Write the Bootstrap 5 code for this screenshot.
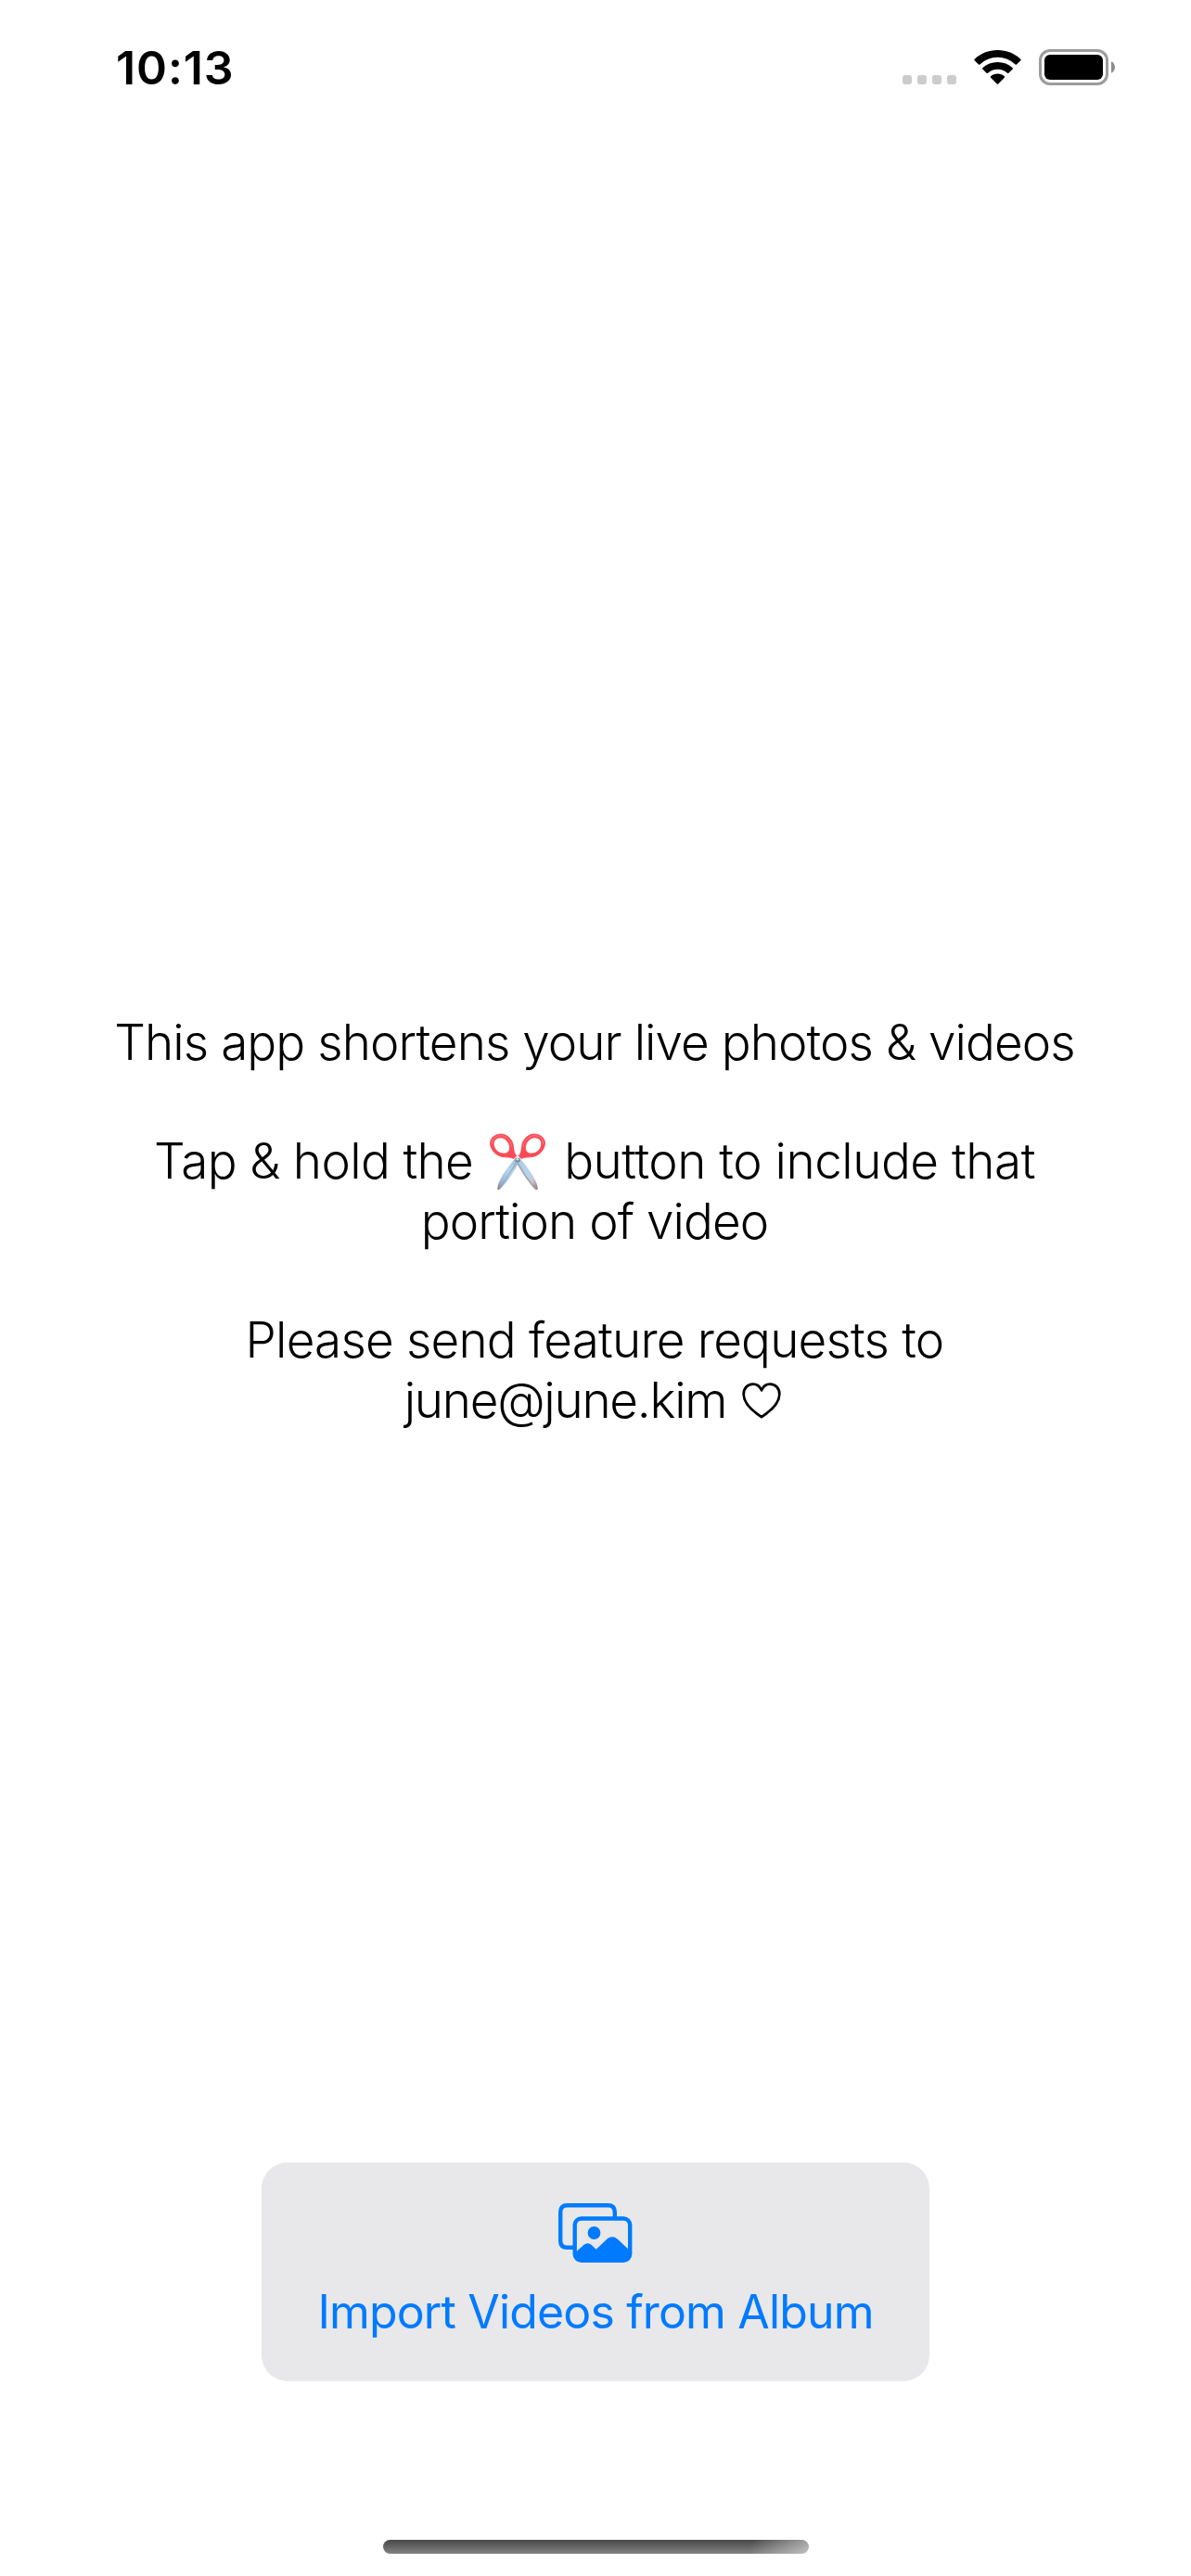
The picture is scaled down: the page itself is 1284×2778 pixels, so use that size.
<!DOCTYPE html>
<html lang="en">
<head>
<meta charset="utf-8">
<meta name="viewport" content="width=device-width, initial-scale=1">
<title>Shorten live photos &amp; videos</title>
<link href="https://cdn.jsdelivr.net/npm/bootstrap@5.3.0/dist/css/bootstrap.min.css" rel="stylesheet">
<script src="https://cdn.jsdelivr.net/npm/bootstrap@5.3.0/dist/js/bootstrap.bundle.min.js"></script>
<style>
  body { font-family: Inter, "Liberation Sans", sans-serif; color: #000; background: #fff; height: 2778px; overflow: hidden; }
  svg { display: block; flex: none; }
  .status-bar { height: 141px; padding: 53px 82px 0 125px; }
  .clock { font-size: 50px; font-weight: 600; line-height: 60px; letter-spacing: .9px; margin-top: -10px; }
  .signal { gap: 6px; margin: 28px 19px 0 0; }
  .signal i { width: 10px; height: 10px; border-radius: 3px; background: #ccc; }
  .wifi { margin: 1px 19px 0 0; }
  .intro { margin-top: 950.5px; padding-right: 2px; font-size: 53px; font-weight: 300; line-height: 64.4px; white-space: nowrap; }
  .intro p { margin-bottom: 64.4px; }
  .intro p:last-child { margin-bottom: 0; }
  .intro p > span { display: flex; justify-content: center; height: 64.4px; }
  .scissors { margin: 2px 20px 0 18px; }
  .heart { margin: 13px 4px 0 17px; }
  .import-btn { --bs-btn-bg: #e8e8ea; --bs-btn-color: #007aff; --bs-btn-hover-bg: #dedee1; --bs-btn-hover-color: #007aff;
    width: 720px; height: 236px; border: 0; border-radius: 28px; padding: 44px 0 0; margin-top: 789.5px;
    font-size: 50px; line-height: 60px; letter-spacing: -.85px; }
  .import-btn span { margin-top: 23px; }
  .home-bar { width: 459px; height: 15px; border-radius: 8px; margin-top: auto; margin-bottom: 24px;
    background: linear-gradient(100deg, rgba(255,255,255,0) 86%, rgba(255,255,255,.5) 100%), linear-gradient(#484848, #828282); }
  .ls-a { letter-spacing: -.93px; } .ls-b { letter-spacing: -.65px; } .ls-c { letter-spacing: -.49px; }
  .ls-d { letter-spacing: -.93px; } .ls-e { letter-spacing: -.8px; } .ls-f { letter-spacing: -1.27px; }
</style>
</head>
<body class="d-flex flex-column align-items-center">
  <header class="status-bar w-100 d-flex justify-content-between align-items-start">
    <div class="clock">10:13</div>
    <div class="d-flex align-items-start">
      <div class="signal d-flex"><i></i><i></i><i></i><i></i></div>
      <svg class="wifi" width="51" height="37" viewBox="0 0 51 37" aria-label="Wi-Fi">
        <path d="M25.500 0C35 0 44 3.600 50.300 9.800Q51 10.500 50.300 11.200L46 15.400Q45.300 16 44.600 15.400A27.500 27.500 0 0 0 6.400 15.400Q5.700 16 5 15.400L.7 11.200Q0 10.500.7 9.800C7 3.600 16 0 25.500 0Z"/>
        <path d="M25.500 13C31.600 13 37.300 15.200 41.700 19.200Q42.400 19.900 41.700 20.600L37.400 24.800Q36.700 25.400 36 24.800A15.600 15.600 0 0 0 15 24.800Q14.300 25.400 13.600 24.800L9.300 20.600Q8.600 19.900 9.300 19.200C13.700 15.200 19.400 13 25.500 13Z"/>
        <path d="M25.500 25.600C28.300 25.600 30.900 26.600 32.900 28.300Q33.600 29 32.900 29.700L26.200 36.400Q25.500 37 24.800 36.400L18.100 29.700Q17.400 29 18.100 28.300C20.100 26.600 22.700 25.600 25.500 25.600Z"/>
      </svg>
      <svg width="82" height="39" viewBox="0 0 82 39" aria-label="Battery">
        <rect x="1.500" y="1.500" width="72" height="36" rx="10.500" fill="none" stroke="#9c9c9c" stroke-width="3"/>
        <rect x="6" y="6" width="63" height="27" rx="6"/>
        <path d="M78 13.300C80.400 14.300 82 16.700 82 19.500S80.400 24.700 78 25.700Z" fill="#8c8c8c"/>
      </svg>
    </div>
  </header>

  <main class="intro w-100">
    <p><span class="ls-a">This app shortens your live photos &amp; videos</span></p>
    <p>
      <span><b class="fw-light ls-b">Tap &amp; hold the</b>
        <svg class="scissors" width="60" height="62" viewBox="0 0 60 62" aria-label="scissors">
          <defs>
            <linearGradient id="bladeL" x1="1" y1="0" x2="0" y2="1"><stop offset="0" stop-color="#8eb4cf"/><stop offset=".45" stop-color="#b4d8f2"/><stop offset=".8" stop-color="#93b6d3"/><stop offset="1" stop-color="#8a7478"/></linearGradient>
            <linearGradient id="bladeR" x1="0" y1="0" x2="1" y2="1"><stop offset="0" stop-color="#a2c6e0"/><stop offset=".5" stop-color="#b5d5ee"/><stop offset=".75" stop-color="#c5c9d4"/><stop offset="1" stop-color="#8a6f73"/></linearGradient>
          </defs>
          <path d="M28 26.500L33 28.500C28 38 21 51 10.500 60.800Q8.500 62 8.300 59.500C9 51 18 38 28 26.500Z" fill="url(#bladeL)"/>
          <path d="M32 26.500L27 28.500C32 38 39 51 49.500 60.800Q51.500 62 51.700 59.500C51 51 42 38 32 26.500Z" fill="url(#bladeR)"/>
          <path d="M28.500 32Q20 46 10 60" stroke="#a69aa3" stroke-width="1" fill="none"/>
          <path d="M30 32Q38 47 49.500 60.500" stroke="#ad9da3" stroke-width="1.500" fill="none"/>
          <g fill="#f94a55" stroke="#f94a55" stroke-width=".8" fill-rule="evenodd">
            <path id="loop" d="M12 1C18.500.8 24.600 7 25.400 13.500C25.900 18 26 21.500 28.800 24.500L26 27.500C22 25.500 18.500 26.300 14 25.600C6 24.200.5 17 .5 11C.5 5 5.500 1.200 12 1ZM11.700 4.800C7 4.900 4.300 7.700 4.300 11.500C4.300 16.500 8.700 21.500 14 22C19 22.400 21.500 19.800 21.500 15.500C21.500 10.200 16.500 4.700 11.700 4.800Z"/>
            <use href="#loop" transform="matrix(-1 0 0 1 60 0)"/>
          </g>
          <g fill="none" stroke="#ff8b8f" stroke-width=".8">
            <path d="M2.300 12C2 6 6 3 11.500 2.700C17.500 2.500 23.500 9 23.700 14.500"/>
            <path d="M36.300 14.500C36.500 9 42.500 2.500 48.500 2.700C54 3 58 6 57.700 12"/>
          </g>
          <circle cx="30" cy="29" r="2.600" fill="#6f8496"/><circle cx="29.800" cy="28.300" r="1.300" fill="#dcecf6"/>
        </svg>
        <b class="fw-light ls-c">button to include that</b></span>
      <span class="ls-d">portion of video</span>
    </p>
    <p>
      <span class="ls-e">Please send feature requests to</span>
      <span><b class="fw-light ls-f">june@june.kim</b>
        <svg class="heart" width="42" height="39" viewBox="0 0 42 39" fill="none" stroke="#000" stroke-width="2.800" stroke-linejoin="round" aria-label="heart"><path d="M21 8.200C19.200 4.200 15.900 1.700 11.800 1.700C5.800 1.700 1.700 6.300 1.700 12.500C1.700 21.500 9 29.300 21 37C33 29.300 40.300 21.500 40.300 12.500C40.300 6.300 36.200 1.700 30.200 1.700C26.100 1.700 22.800 4.200 21 8.200Z"/></svg></span>
    </p>
  </main>

  <button type="button" class="btn import-btn d-flex flex-column align-items-center">
    <svg width="80" height="64" viewBox="0 0 80 64" fill="none" stroke="#007aff" stroke-width="4.400" aria-hidden="true">
      <path d="M16 47.800H9.500Q2.200 47.800 2.200 40.500V9.500Q2.200 2.200 9.500 2.200H53.500Q60.800 2.200 60.800 9.500V15"/>
      <rect x="17.700" y="16.500" width="59.500" height="45.300" rx="7"/>
      <circle cx="38.500" cy="32" r="6.900" fill="#007aff" stroke="none"/>
      <path d="M18 53.500L27.500 44.800Q31.500 41.500 35.500 44.800L40.700 49.800L52.500 38.500Q58 33.800 63.500 38.500L77.500 51.500V55Q77.500 62 70 62H25.500Q18 62 18 55Z" fill="#007aff" stroke="none"/>
    </svg>
    <span>Import Videos from Album</span>
  </button>

  <div class="home-bar"></div>
</body>
</html>
